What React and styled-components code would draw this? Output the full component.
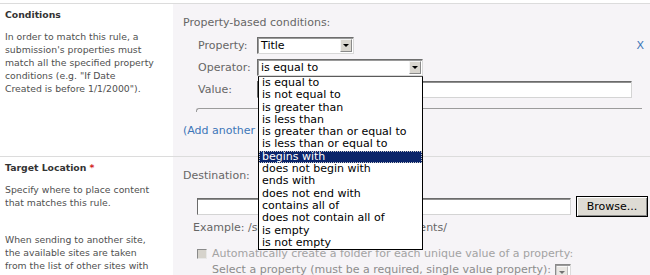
import React from "react";
import styled, { createGlobalStyle } from "styled-components";

const GlobalStyle = createGlobalStyle`
  body {
    margin: 0;
    background: #ffffff;
    font-family: "DejaVu Sans", Verdana, sans-serif;
  }
`;

const operators = [
  "is equal to",
  "is not equal to",
  "is greater than",
  "is less than",
  "is greater than or equal to",
  "is less than or equal to",
  "begins with",
  "does not begin with",
  "ends with",
  "does not end with",
  "contains all of",
  "does not contain all of",
  "is empty",
  "is not empty",
];

const Page = styled.div`
  padding-top: 3px;
  width: 650px;
  height: 275px;
  overflow: hidden;
  box-sizing: border-box;
`;

const Section = styled.div`
  display: grid;
  grid-template-columns: 173px 1fr;
  border-top: 1px solid #dcdcdc;
  height: ${(p) => p.height}px;
`;

const Info = styled.div`
  padding: 4px 4px 0 5px;
  font-size: 9.3px;
  line-height: 13px;
  color: #4f4f4f;
`;

const InfoTitle = styled.div`
  font-weight: bold;
  color: #333333;
  margin-bottom: 9px;
`;

const Required = styled.span`
  color: #d21a1a;
  margin-left: 3px;
`;

const Para = styled.p`
  margin: 0 0 24px;
`;

const Controls = styled.div`
  background: #f6f4f7;
  padding: 12px 6px 0 10px;
  font-size: 11px;
  line-height: 14px;
  color: #666666;
`;

const Heading = styled.div`
  margin-bottom: ${(p) => p.gap}px;
`;

const FieldRow = styled.div`
  display: flex;
  align-items: center;
  height: 17px;
  padding-left: 15px;
  margin-bottom: 5px;
`;

const Label = styled.span`
  width: 59px;
  flex: none;
`;

const Select = styled.div`
  position: relative;
  display: flex;
  align-items: center;
  width: ${(p) => p.width}px;
  height: 17px;
  box-sizing: border-box;
  background: #ffffff;
  border: 1px solid;
  border-color: #6e6e6e #d8d8d8 #d8d8d8 #6e6e6e;
  box-shadow: inset 1px 1px 0 #9a9a9a;
  color: #000000;
  padding-left: 3px;
  font-size: 11px;
`;

const SelectText = styled.span`
  flex: 1;
  white-space: nowrap;
`;

const ArrowButton = styled.span`
  display: flex;
  align-items: center;
  justify-content: center;
  width: 12px;
  height: 13px;
  margin-right: 1px;
  box-sizing: border-box;
  background: #d9d6cf;
  border: 1px solid;
  border-color: #f4f4f4 #8a8a8a #8a8a8a #f4f4f4;
  opacity: ${(p) => (p.disabled ? 0.55 : 1)};

  &::after {
    content: "";
    border-left: 3px solid transparent;
    border-right: 3px solid transparent;
    border-top: 3px solid #000000;
  }
`;

const TextBox = styled.div`
  width: ${(p) => p.width}px;
  height: 17px;
  box-sizing: border-box;
  background: #ffffff;
  border: 1px solid;
  border-color: #6b6b6b #d4d4d4 #d4d4d4 #6b6b6b;
  box-shadow: inset 0 1px 0 #8f8f8f;
`;

const RemoveLink = styled.span`
  margin-left: auto;
  color: #3d76b8;
  font-size: 11px;
`;

const Fieldset = styled.div`
  margin: 10px 2px 0 13px;
  height: 3px;
  border-top: 1px solid #9c9c9c;
  border-left: 1px solid #9c9c9c;
  border-top-left-radius: 3px;
`;

const AddLink = styled.div`
  margin-top: 12px;
  color: #3d76b8;
`;

const DropList = styled.ul`
  position: absolute;
  top: 16px;
  left: 0;
  z-index: 5;
  width: 165px;
  margin: 0;
  padding: 0;
  list-style: none;
  box-sizing: border-box;
  background: #ffffff;
  border: 1px solid #000000;
  border-top-color: #5a5a5a;
`;

const DropItem = styled.li`
  height: 12.3px;
  line-height: 12.3px;
  padding-left: 3px;
  white-space: nowrap;
  color: ${(p) => (p.selected ? "#ffffff" : "#000000")};
  background: ${(p) => (p.selected ? "#0a246a" : "transparent")};
  outline: ${(p) => (p.selected ? "1px dotted #c8c8c8" : "none")};
  outline-offset: -1px;
`;

const BrowseRow = styled.div`
  display: flex;
  align-items: center;
  gap: 5px;
  padding-left: 14px;
  height: 21px;
`;

const Button = styled.div`
  width: 72px;
  height: 21px;
  box-sizing: border-box;
  border: 1px solid #000000;
  background: #dedbd4;
  box-shadow: inset 1px 1px 0 #ffffff, inset -1px -1px 0 #8a8a8a;
  color: #000000;
  font-size: 11px;
  display: flex;
  align-items: center;
  justify-content: center;
`;

const Example = styled.div`
  margin-top: 4px;
  padding-left: 10px;
  white-space: nowrap;
`;

const CheckRow = styled.div`
  display: flex;
  align-items: center;
  gap: 5px;
  margin-top: 12px;
  padding-left: 14px;
  color: #a3a3a3;
  white-space: nowrap;
`;

const CheckBox = styled.span`
  width: 10px;
  height: 10px;
  box-sizing: border-box;
  background: #d6d3cc;
  border: 1px solid;
  border-color: #8a8a8a #e8e8e8 #e8e8e8 #8a8a8a;
`;

const SubRow = styled.div`
  display: flex;
  align-items: flex-start;
  gap: 4px;
  margin-top: 2px;
  padding-left: 29px;
  color: #8c8c8c;
  white-space: nowrap;
`;

const SmallSelect = styled(Select)`
  width: 16px;
  height: 16px;
  padding-left: 0;
  margin-top: 1px;
  border-color: #8a8a8a #dcdcdc #dcdcdc #8a8a8a;
`;

export default function App() {
  return (
    <>
      <GlobalStyle />
      <Page>
        <Section height={152}>
          <Info>
            <InfoTitle>Conditions</InfoTitle>
            <Para>
              In order to match this rule, a<br />
              submission's properties must<br />
              match all the specified property<br />
              conditions (e.g. "If Date<br />
              Created is before 1/1/2000").
            </Para>
          </Info>
          <Controls>
            <Heading gap={7}>Property-based conditions:</Heading>
            <FieldRow>
              <Label>Property:</Label>
              <Select width={97}>
                <SelectText>Title</SelectText>
                <ArrowButton />
              </Select>
              <RemoveLink>X</RemoveLink>
            </FieldRow>
            <FieldRow>
              <Label>Operator:</Label>
              <Select width={166}>
                <SelectText>is equal to</SelectText>
                <ArrowButton />
                <DropList>
                  {operators.map((op) => (
                    <DropItem key={op} selected={op === "begins with"}>
                      {op}
                    </DropItem>
                  ))}
                </DropList>
              </Select>
            </FieldRow>
            <FieldRow>
              <Label>Value:</Label>
              <TextBox width={375} />
            </FieldRow>
            <Fieldset />
            <AddLink>(Add another property-based condition)</AddLink>
          </Controls>
        </Section>
        <Section height={130}>
          <Info>
            <InfoTitle>
              Target Location<Required>*</Required>
            </InfoTitle>
            <Para>
              Specify where to place content<br />
              that matches this rule.
            </Para>
            <Para>
              When sending to another site,<br />
              the available sites are taken<br />
              from the list of other sites with<br />
              content organizers defined.
            </Para>
          </Info>
          <Controls>
            <Heading gap={13}>Destination:</Heading>
            <BrowseRow>
              <TextBox width={374} />
              <Button>Browse...</Button>
            </BrowseRow>
            <Example>Example: /sites/SiteName/Shared Documents/</Example>
            <CheckRow>
              <CheckBox />
              <span>Automatically create a folder for each unique value of a property:</span>
            </CheckRow>
            <SubRow>
              <span>Select a property (must be a required, single value property):</span>
              <SmallSelect>
                <ArrowButton disabled />
              </SmallSelect>
            </SubRow>
          </Controls>
        </Section>
      </Page>
    </>
  );
}
